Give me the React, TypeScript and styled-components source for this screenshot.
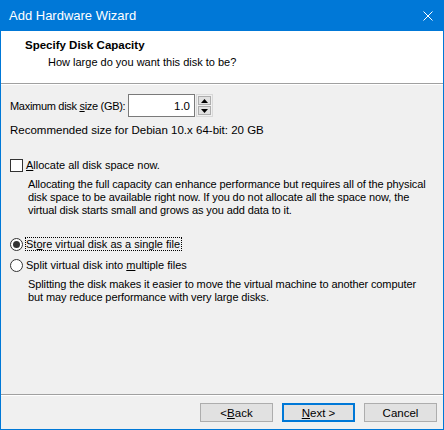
import React from 'react'
import styled, { createGlobalStyle } from 'styled-components'

const GlobalStyle = createGlobalStyle`
  html, body {
    margin: 0;
    padding: 0;
  }
  body {
    font-family: 'Liberation Sans', Arial, sans-serif;
    font-size: 11px;
    color: #000;
    background: #fff;
  }
`

const Window = styled.div`
  width: 444px;
  height: 430px;
  box-sizing: border-box;
  border: 1px solid #0078d7;
  border-top: none;
  background: #f0f0f0;
  display: flex;
  flex-direction: column;
`

const TitleBar = styled.div`
  height: 31px;
  flex: none;
  background: #0078d7;
  color: #fff;
  display: flex;
  align-items: center;
  justify-content: space-between;
  padding-left: 8px;
  font-size: 13px;
`

const CloseButton = styled.div`
  width: 30px;
  height: 31px;
  display: flex;
  align-items: center;
  justify-content: center;
`

const Header = styled.header`
  flex: none;
  background: #fff;
  padding: 6px 0 13px 24px;
  border-bottom: 1px solid #a0a0a0;
  box-shadow: 0 1px 0 #fff;
  line-height: 16px;
`

const HeaderTitle = styled.div`
  font-weight: bold;
  font-size: 11.5px;
  margin-bottom: 1px;
`

const HeaderSub = styled.div`
  padding-left: 23px;
`

const Body = styled.main`
  flex: 1;
  margin-top: 1px;
  padding: 9px 0 0 9px;
  display: flex;
  flex-direction: column;
`

const SizeRow = styled.div`
  display: flex;
  align-items: center;
  height: 23px;
`

const Label = styled.span`
  width: 118px;
  white-space: nowrap;
  letter-spacing: -0.3px;
`

const NumberBox = styled.div`
  width: 67px;
  height: 23px;
  box-sizing: border-box;
  border: 1px solid #7a7a7a;
  background: #fff;
  display: flex;
  align-items: center;
  justify-content: flex-end;
  padding-right: 4px;
  font-size: 11.5px;
`

const Spinner = styled.div`
  margin-left: 1px;
  width: 17px;
  height: 23px;
  box-sizing: border-box;
  border: 1px solid #d9d9d9;
  padding: 1px;
  display: flex;
  flex-direction: column;
  gap: 1px;
`

const SpinButton = styled.div`
  flex: 1;
  border: 1px solid #adadad;
  background: #e1e1e1;
  display: flex;
  align-items: center;
  justify-content: center;
`

const Note = styled.div`
  margin-top: 5px;
  line-height: 16px;
  font-size: 11.5px;
`

const OptionRow = styled.div<{ $gap: number }>`
  margin-top: ${(p) => p.$gap}px;
  display: flex;
  align-items: center;
  height: 16px;
`

const CheckBox = styled.span`
  width: 13px;
  height: 13px;
  box-sizing: border-box;
  border: 1px solid #333;
  background: #fff;
  margin-right: 3px;
  flex: none;
`

const Radio = styled.span<{ $checked?: boolean }>`
  width: 13px;
  height: 13px;
  box-sizing: border-box;
  border: 1px solid #333;
  border-radius: 50%;
  background: #fff;
  margin-right: 3px;
  flex: none;
  display: flex;
  align-items: center;
  justify-content: center;

  &::after {
    content: '';
    display: ${(p) => (p.$checked ? 'block' : 'none')};
    width: 7px;
    height: 7px;
    border-radius: 50%;
    background: #333;
  }
`

const OptionLabel = styled.span<{ $focused?: boolean }>`
  outline: ${(p) => (p.$focused ? '1px dotted #000' : 'none')};
  outline-offset: 0;
  padding: 0 1px 0 0;
  line-height: 12px;
  white-space: nowrap;
`

const Description = styled.div`
  margin-top: 5px;
  padding-left: 18px;
  line-height: 13px;
  letter-spacing: -0.1px;
  white-space: nowrap;
`

const Footer = styled.footer`
  flex: none;
  border-top: 1px solid #a0a0a0;
  box-shadow: inset 0 1px 0 #fff;
  padding: 8px 6px 7px 0;
  display: flex;
  justify-content: flex-end;
  gap: 9px;
`

const Button = styled.div<{ $default?: boolean }>`
  width: 73px;
  height: 19px;
  box-sizing: border-box;
  background: #e1e1e1;
  border: ${(p) => (p.$default ? '2px solid #0078d7' : '1px solid #adadad')};
  display: flex;
  align-items: center;
  justify-content: center;
  font-size: 11.5px;
`

const Key = styled.span`
  text-decoration: underline;
`

export default function App() {
  return (
    <>
      <GlobalStyle />
      <Window>
        <TitleBar>
          <span>Add Hardware Wizard</span>
          <CloseButton>
            <svg width="10" height="10" viewBox="0 0 10 10">
              <path d="M0.5 0.5L9.5 9.5M9.5 0.5L0.5 9.5" stroke="#fff" strokeWidth="1" />
            </svg>
          </CloseButton>
        </TitleBar>
        <Header>
          <HeaderTitle>Specify Disk Capacity</HeaderTitle>
          <HeaderSub>How large do you want this disk to be?</HeaderSub>
        </Header>
        <Body>
          <SizeRow>
            <Label>
              Maximum disk <Key>s</Key>ize (GB):
            </Label>
            <NumberBox>1.0</NumberBox>
            <Spinner>
              <SpinButton>
                <svg width="7" height="4" viewBox="0 0 7 4">
                  <path d="M3.5 0L7 4H0Z" fill="#000" />
                </svg>
              </SpinButton>
              <SpinButton>
                <svg width="7" height="4" viewBox="0 0 7 4">
                  <path d="M0 0H7L3.5 4Z" fill="#000" />
                </svg>
              </SpinButton>
            </Spinner>
          </SizeRow>
          <Note>Recommended size for Debian 10.x 64-bit: 20 GB</Note>

          <OptionRow $gap={19}>
            <CheckBox />
            <OptionLabel>
              <Key>A</Key>llocate all disk space now.
            </OptionLabel>
          </OptionRow>
          <Description>
            Allocating the full capacity can enhance performance but requires all of the physical
            <br />
            disk space to be available right now. If you do not allocate all the space now, the
            <br />
            virtual disk starts small and grows as you add data to it.
          </Description>

          <OptionRow $gap={19}>
            <Radio $checked />
            <OptionLabel $focused>
              St<Key>o</Key>re virtual disk as a single file
            </OptionLabel>
          </OptionRow>
          <OptionRow $gap={5}>
            <Radio />
            <OptionLabel>
              Split virtual disk into <Key>m</Key>ultiple files
            </OptionLabel>
          </OptionRow>
          <Description>
            Splitting the disk makes it easier to move the virtual machine to another computer
            <br />
            but may reduce performance with very large disks.
          </Description>
        </Body>
        <Footer>
          <Button>
            &lt; <Key>B</Key>ack
          </Button>
          <Button $default>
            <Key>N</Key>ext &gt;
          </Button>
          <Button>Cancel</Button>
        </Footer>
      </Window>
    </>
  )
}
